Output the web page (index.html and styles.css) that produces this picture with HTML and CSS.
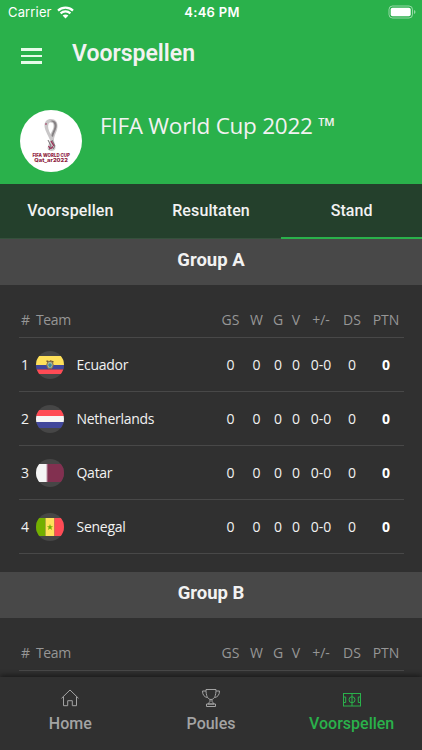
FILE: index.html
```
<!DOCTYPE html>
<html lang="nl">
<head>
    <meta charset="UTF-8">
    <meta name="viewport" content="width=device-width, initial-scale=1.0">
    <title>Voorspellen</title>
    <link rel="stylesheet" href="styles.css">
</head>
<body>
    <div class="app">
        <header class="header">
            <!-- Status bar -->
            <div class="status-bar">
                <div class="carrier">
                    <span>Carrier</span>
                    <svg width="17" height="13" viewBox="0 0 17 13" fill="none" stroke="#fff" stroke-width="2.2">
                        <path d="M1 4.6C5.200 .6 11.800 .6 16 4.600M3.600 7.400C6.400 4.800 10.600 4.800 13.400 7.400"/>
                        <path d="M8.500 12.400L5.600 9.500C7.200 8 9.800 8 11.400 9.500Z" fill="#fff" stroke="none"/>
                    </svg>
                </div>
                <span class="time">4:46 PM</span>
                <svg class="battery" width="28" height="14" viewBox="0 0 28 14">
                    <rect x="1" y="1" width="23.500" height="12" rx="3.500" fill="none" stroke="#fff" stroke-opacity=".5"/>
                    <rect x="2.700" y="2.700" width="20" height="8.600" rx="1.800" fill="#fff"/>
                    <path d="M26 5v4q1.500-.6 1.500-2T26 5z" fill="#fff" fill-opacity=".5"/>
                </svg>
            </div>

            <div class="title-bar">
                <div class="menu"><i></i><i></i><i></i></div>
                <h1>Voorspellen</h1>
            </div>

            <div class="tournament">
                <svg class="logo" width="62" height="62" viewBox="0 0 62 62">
                    <circle cx="31" cy="31" r="31" fill="#fff"/>
                    <path d="M30 30C28 25 24.500 20 24.500 15.500C24.500 11.500 27 9 31 9C35.500 9 38 12 37.500 17C37 23 32.500 27 34.500 33L35.500 38C35 42 28 42 27.500 38Z" fill="#c9c7c8"/>
                    <path d="M30.500 24C28.500 20 27.500 17 28.500 14C29.500 12 33 12 33.500 15C34 18 32 21 30.500 24Z" fill="#fff"/>
                    <path d="M29.500 11.500C34 8.500 38.500 13 36 19C35 22 33.500 24 33 27L31.500 26C32 22 35 19 34.500 15C34 11.500 31 11 29.500 11.500Z" fill="#858183"/>
                    <path d="M28 30L31 36L29 40M32 30L35 36L33 39" fill="none" stroke="#777174" stroke-width="1"/>
                    <path d="M25.500 14.500l1-1M31 31l3 5M28.500 36l2 3M31 38.500l2-2" fill="none" stroke="#9b2c54" stroke-width="1.300"/>
                    <text x="12.500" y="47.300" textLength="37.500" lengthAdjust="spacingAndGlyphs" class="logo-top">FIFA WORLD CUP</text>
                    <text x="14.300" y="52.300" textLength="33.500" lengthAdjust="spacingAndGlyphs" class="logo-bottom">Qat_ar2022</text>
                </svg>
                <h2>FIFA World Cup 2022 ™</h2>
            </div>
        </header>

        <div class="tabs">
            <div class="tab">Voorspellen</div>
            <div class="tab">Resultaten</div>
            <div class="tab active">Stand</div>
        </div>

        <main class="standings">
            <!-- Group A -->
            <h3>Group A</h3>
            <div class="table">
                <div class="row head">
                    <span>#</span><span class="team">Team</span><span>GS</span><span>W</span><span>G</span><span>V</span><span>+/-</span><span>DS</span><span>PTN</span>
                </div>
                <div class="row">
                    <span>1</span>
                    <span class="team">
                        <svg class="flag" viewBox="0 0 28 28">
                            <path fill="#ffe15a" d="M0 5h28v9H0z"/>
                            <path fill="#41479b" d="M0 14h28v4.500H0z"/>
                            <path fill="#ff4b55" d="M0 18.500h28V23H0z"/>
                            <path d="M10.500 10l3 1 1-1 3 1" fill="none" stroke="#6b5a3a" stroke-width="1.500"/>
                            <ellipse cx="14" cy="14" rx="3.200" ry="3.700" fill="#a2b5a1" stroke="#8b6d42"/>
                            <path d="M12 14l2-2 2 2-2 3z" fill="#3c8d9c"/>
                        </svg>
                        Ecuador
                    </span>
                    <span>0</span><span>0</span><span>0</span><span>0</span><span>0-0</span><span>0</span><span class="points">0</span>
                </div>
                <div class="row">
                    <span>2</span>
                    <span class="team">
                        <svg class="flag" viewBox="0 0 28 28">
                            <path fill="#ff4b55" d="M0 5h28v6H0z"/>
                            <path fill="#f5f5f5" d="M0 11h28v6H0z"/>
                            <path fill="#41479b" d="M0 17h28v6H0z"/>
                        </svg>
                        Netherlands
                    </span>
                    <span>0</span><span>0</span><span>0</span><span>0</span><span>0-0</span><span>0</span><span class="points">0</span>
                </div>
                <div class="row">
                    <span>3</span>
                    <span class="team">
                        <svg class="flag" viewBox="0 0 28 28">
                            <path fill="#f5f5f5" d="M0 5h13v18H0z"/>
                            <path fill="#823050" d="M28 5H10l2 1-2 1 2 1-2 1 2 1-2 1 2 1-2 1 2 1-2 1 2 1-2 1 2 1-2 1 2 1-2 1 2 1-2 1h18z"/>
                        </svg>
                        Qatar
                    </span>
                    <span>0</span><span>0</span><span>0</span><span>0</span><span>0-0</span><span>0</span><span class="points">0</span>
                </div>
                <div class="row">
                    <span>4</span>
                    <span class="team">
                        <svg class="flag" viewBox="0 0 28 28">
                            <path fill="#73af00" d="M0 5h9.500v18H0z"/>
                            <path fill="#ffe15a" d="M9.500 5h9v18h-9z"/>
                            <path fill="#ff4b55" d="M18.500 5H28v18h-9.500z"/>
                            <path fill="#73af00" d="M14 11l.8 2.200h2.300l-1.800 1.400.7 2.300-2-1.400-2 1.400.7-2.300-1.800-1.400h2.300z"/>
                        </svg>
                        Senegal
                    </span>
                    <span>0</span><span>0</span><span>0</span><span>0</span><span>0-0</span><span>0</span><span class="points">0</span>
                </div>
            </div>

            <!-- Group B -->
            <h3>Group B</h3>
            <div class="table">
                <div class="row head">
                    <span>#</span><span class="team">Team</span><span>GS</span><span>W</span><span>G</span><span>V</span><span>+/-</span><span>DS</span><span>PTN</span>
                </div>
            </div>
        </main>

        <nav class="bottom-nav">
            <div class="nav-item">
                <svg width="20" height="20" viewBox="0 0 20 20" fill="none" stroke="currentColor" stroke-linejoin="round">
                    <path d="M1.500 10.300L10 2l8.500 8.300M3.500 9v8.700h4.200v-5h4.600v5h4.200V9"/>
                </svg>
                <span>Home</span>
            </div>
            <div class="nav-item">
                <svg width="20" height="20" viewBox="0 0 20 20" fill="none" stroke="currentColor">
                    <path d="M5 1.500h10c0 6-1.500 10-5 10s-5-4-5-10zM5 3H1.500c0 4 2 6 4.700 6.500M15 3h3.500c0 4-2 6-4.700 6.500M9 11.500v2c0 1-2 1-2 2.500h6c0-1.500-2-1.500-2-2.500v-2M5.500 16h9v2.500h-9z"/>
                </svg>
                <span>Poules</span>
            </div>
            <div class="nav-item active">
                <svg width="20" height="20" viewBox="0 0 20 20" fill="none" stroke="currentColor">
                    <rect x="1.500" y="5.500" width="17" height="12.500"/>
                    <circle cx="10" cy="11.750" r="3"/>
                    <path d="M10 5.500v12.500M1.500 9h2.200v5.500H1.500M18.500 9h-2.200v5.500h2.200"/>
                </svg>
                <span>Voorspellen</span>
            </div>
        </nav>
    </div>
</body>
</html>
```
FILE: styles.css
```
* {
    box-sizing: border-box;
}
body {
    margin: 0;
    background-color: #303030;
    color: #f2f2f2;
    font-family: "Open Sans", sans-serif;
}
.app {
    display: flex;
    flex-direction: column;
    height: 750px;
    overflow: hidden;
}
h1, h2, h3 {
    margin: 0;
}

/* Header */
.header {
    height: 184px;
    flex-shrink: 0;
    background-color: #2ab14b;
}
.status-bar {
    display: grid;
    grid-template-columns: 1fr auto 1fr;
    align-items: center;
    height: 24px;
    padding: 0 6px 0 8px;
    font-family: Inter, sans-serif;
    font-size: 13px;
    color: #fff;
}
.carrier {
    display: flex;
    align-items: center;
    gap: 5px;
    letter-spacing: 0.15px;
}
.time {
    font-weight: 600;
    letter-spacing: 0.3px;
}
.battery {
    justify-self: end;
}
.title-bar {
    display: flex;
    align-items: center;
    height: 62px;
    padding-left: 21px;
}
.menu {
    display: flex;
    flex-direction: column;
    gap: 4px;
    width: 21px;
    margin-right: 30px;
    padding-top: 2px;
}
.menu i {
    height: 2.500px;
    background-color: #e6fbe9;
}
h1 {
    font: 600 23px/30px Roboto, sans-serif;
    padding-bottom: 3px;
}
.tournament {
    display: flex;
    gap: 18px;
    padding: 24px 0 0 20px;
}
.logo-top, .logo-bottom {
    font-family: Inter, sans-serif;
    font-weight: 800;
    font-size: 5px;
    fill: #8d1b3d;
}
h2 {
    font-size: 22.500px;
    font-weight: 400;
    line-height: 31px;
    letter-spacing: -0.25px;
}

/* Tabs */
.tabs {
    display: flex;
    height: 55px;
    flex-shrink: 0;
    background-color: #24402c;
}
.tab {
    flex: 1;
    border-bottom: 1px solid #35503c;
    text-align: center;
    font: 500 16px/53px Roboto, sans-serif;
    letter-spacing: 0.1px;
}
.tab.active {
    border-bottom: 2px solid #2ab14b;
}

/* Standings */
.standings {
    flex: 1;
    min-height: 0;
    overflow: hidden;
}
h3 {
    height: 46px;
    background-color: #484848;
    text-align: center;
    font: 700 18.500px/43px Roboto, sans-serif;
}
.table {
    padding: 0 18px 18px 19px;
    font-size: 14px;
}
.row {
    display: grid;
    grid-template-columns: 17px 1fr 25px 27px 16px 20px 30px 32px 36px;
    align-items: center;
    height: 54px;
    border-bottom: 1px solid #484848;
    text-align: center;
}
.row.head {
    height: 53px;
    padding-top: 17px;
    color: #969696;
}
.row span:first-child {
    padding-left: 2px;
    text-align: left;
}
.team {
    display: flex;
    align-items: center;
    letter-spacing: -0.27px;
}
.head .team {
    letter-spacing: -0.4px;
}
.flag {
    width: 28px;
    height: 28px;
    margin-right: 12.500px;
    border-radius: 50%;
    background-color: #464646;
}
.points {
    font-weight: 700;
    color: #fff;
}

/* Bottom navigation */
.bottom-nav {
    display: flex;
    height: 73px;
    flex-shrink: 0;
    background-color: #303030;
    box-shadow: 0 -2px 5px rgba(0, 0, 0, 0.45);
    position: relative;
}
.nav-item {
    flex: 1;
    display: flex;
    flex-direction: column;
    align-items: center;
    padding-top: 11px;
    color: #a3a3a3;
    font: 500 16px/20px Roboto, sans-serif;
}
.nav-item span {
    margin-top: 6px;
}
.nav-item.active {
    color: #2ab14b;
}
```
